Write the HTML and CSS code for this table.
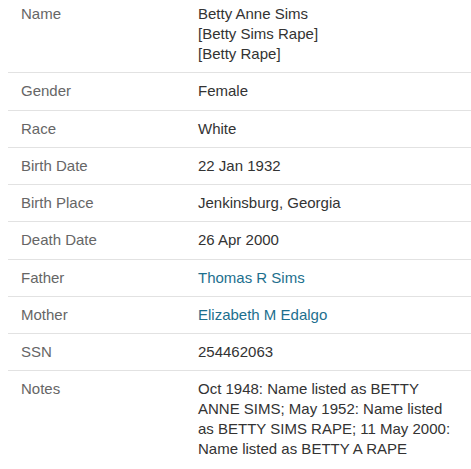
FILE: index.html
```html
<!DOCTYPE html>
<html>
<head>
<meta charset="utf-8">
<link rel="stylesheet" href="styles.css">
</head>
<body>
<div class="facts">
  <div class="row first">
    <div class="label">Name</div>
    <div class="value">Betty Anne Sims<br>[Betty Sims Rape]<br>[Betty Rape]</div>
  </div>
  <div class="row">
    <div class="label">Gender</div>
    <div class="value">Female</div>
  </div>
  <div class="row">
    <div class="label">Race</div>
    <div class="value">White</div>
  </div>
  <div class="row">
    <div class="label">Birth Date</div>
    <div class="value">22 Jan 1932</div>
  </div>
  <div class="row">
    <div class="label">Birth Place</div>
    <div class="value">Jenkinsburg, Georgia</div>
  </div>
  <div class="row">
    <div class="label">Death Date</div>
    <div class="value">26 Apr 2000</div>
  </div>
  <div class="row">
    <div class="label">Father</div>
    <div class="value"><a class="link" href="#">Thomas R Sims</a></div>
  </div>
  <div class="row">
    <div class="label">Mother</div>
    <div class="value"><a class="link" href="#">Elizabeth M Edalgo</a></div>
  </div>
  <div class="row">
    <div class="label">SSN</div>
    <div class="value">254462063</div>
  </div>
  <div class="row last">
    <div class="label">Notes</div>
    <div class="value">Oct 1948: Name listed as BETTY ANNE SIMS; May 1952: Name listed as BETTY SIMS RAPE; 11 May 2000: Name listed as BETTY A RAPE</div>
  </div>
</div>
</body>
</html>
```

FILE: styles.css
```css
html, body {
  margin: 0;
  padding: 0;
  background: #ffffff;
}
body {
  padding-left: 8px;
  font-family: "Liberation Sans", Arial, sans-serif;
  font-size: 15px;
  line-height: 20px;
  overflow: hidden;
}
.facts {
  margin-top: -4px;
}
.row {
  display: grid;
  grid-template-columns: 190px 1fr;
  padding: 8px 0 8.25px;
  border-bottom: 1px solid #e2e2e2;
}
.row.last {
  border-bottom: none;
}
.label {
  padding-left: 13px;
  color: #666666;
}
.value {
  color: #333333;
  padding-right: 15px;
}
.link {
  color: #1d6f8e;
  text-decoration: none;
}
```
